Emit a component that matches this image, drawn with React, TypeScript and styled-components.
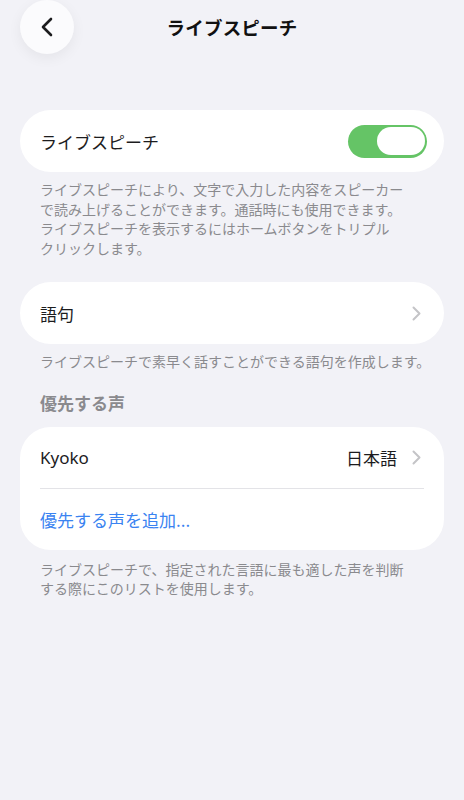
import React from 'react';
import styled, { createGlobalStyle } from 'styled-components';

const GlobalStyle = createGlobalStyle`
  html, body {
    margin: 0;
    padding: 0;
    background: #f2f2f7;
  }
  body {
    font-family: "Noto Sans CJK JP", "Noto Sans", "Liberation Sans", sans-serif;
    color: #1c1c1e;
    -webkit-font-smoothing: antialiased;
  }
`;

const Page = styled.div`
  width: 464px;
  min-height: 800px;
  background: #f2f2f7;
  display: flex;
  flex-direction: column;
`;

const NavBar = styled.header`
  display: grid;
  grid-template-columns: 54px 1fr 54px;
  align-items: center;
  height: 54px;
  padding: 0 20px;
`;

const BackButton = styled.button`
  width: 54px;
  height: 54px;
  border-radius: 50%;
  border: none;
  background: #fbfbfd;
  box-shadow: 0 4px 14px rgba(0, 0, 0, 0.06);
  display: flex;
  align-items: center;
  justify-content: center;
  padding: 0;
  cursor: pointer;
`;

const NavTitle = styled.h1`
  margin: 0;
  text-align: center;
  font-size: 18.5px;
  font-weight: 700;
  letter-spacing: 0.2px;
  color: #111;
`;

const Section = styled.section<{ $top: number }>`
  margin-top: ${(p) => p.$top}px;
`;

const Card = styled.div`
  margin: 0 20px;
  background: #ffffff;
  border-radius: 31px;
  overflow: hidden;
`;

const Row = styled.div<{ $height?: number; $right?: number }>`
  height: ${(p) => p.$height ?? 62}px;
  display: flex;
  align-items: center;
  padding: 0 ${(p) => p.$right ?? 20}px 0 20px;
  gap: 15px;
`;

const RowLabel = styled.span<{ $accent?: boolean }>`
  flex: 1;
  font-size: 17px;
  color: ${(p) => (p.$accent ? '#3a83f1' : '#1c1c1e')};
  font-family: "Noto Sans CJK JP", "Noto Sans", sans-serif;
`;

const LatinLabel = styled(RowLabel)`
  font-family: "Noto Sans", "Liberation Sans", "Noto Sans CJK JP", sans-serif;
`;

const RowValue = styled.span`
  font-size: 17px;
  color: #1c1c1e;
`;

const Separator = styled.div`
  height: 1px;
  margin: 0 20px;
  background: #e3e3e7;
`;

const Footer = styled.p<{ $top?: number }>`
  margin: ${(p) => p.$top ?? 8}px 0 0;
  padding: 0 40px;
  font-size: 14px;
  line-height: 19.5px;
  color: #8a8a8e;
  white-space: nowrap;
`;

const GroupHeader = styled.h2`
  margin: 0;
  padding: 0 40px;
  font-size: 17px;
  line-height: 22px;
  font-weight: 600;
  color: #8a8a8e;
`;

const Toggle = styled.div<{ $on: boolean }>`
  width: 79px;
  height: 33px;
  border-radius: 17px;
  background: ${(p) => (p.$on ? '#65c466' : '#e9e9eb')};
  display: flex;
  align-items: center;
  justify-content: ${(p) => (p.$on ? 'flex-end' : 'flex-start')};
  padding: 0 2.5px;
  box-sizing: border-box;
`;

const Knob = styled.div`
  width: 48px;
  height: 28px;
  border-radius: 14px;
  background: #ffffff;
`;

const Chevron = () => (
  <svg width="9" height="15" viewBox="0 0 9 15" fill="none">
    <path d="M1.5 1.5L7.5 7.5L1.5 13.5" stroke="#c4c4c7" strokeWidth="2" strokeLinecap="round" strokeLinejoin="round" />
  </svg>
);

const BackIcon = () => (
  <svg width="14" height="20" viewBox="0 0 14 20" fill="none">
    <path d="M11 2L3 10L11 18" stroke="#1c1c1e" strokeWidth="2.6" strokeLinecap="round" strokeLinejoin="round" />
  </svg>
);

export default function App() {
  return (
    <Page>
      <GlobalStyle />
      <NavBar>
        <BackButton aria-label="戻る">
          <BackIcon />
        </BackButton>
        <NavTitle>ライブスピーチ</NavTitle>
        <span />
      </NavBar>

      <Section $top={56}>
        <Card>
          <Row $right={17}>
            <RowLabel>ライブスピーチ</RowLabel>
            <Toggle $on>
              <Knob />
            </Toggle>
          </Row>
        </Card>
        <Footer>
          ライブスピーチにより、文字で入力した内容をスピーカー
          <br />
          で読み上げることができます。通話時にも使用できます。
          <br />
          ライブスピーチを表示するにはホームボタンをトリプル
          <br />
          クリックします。
        </Footer>
      </Section>

      <Section $top={24}>
        <Card>
          <Row $right={23}>
            <RowLabel>語句</RowLabel>
            <Chevron />
          </Row>
        </Card>
        <Footer>ライブスピーチで素早く話すことができる語句を作成します。</Footer>
      </Section>

      <Section $top={20}>
        <GroupHeader>優先する声</GroupHeader>
      </Section>

      <Section $top={13}>
        <Card>
          <Row $height={61} $right={23}>
            <LatinLabel>Kyoko</LatinLabel>
            <RowValue>日本語</RowValue>
            <Chevron />
          </Row>
          <Separator />
          <Row $height={61}>
            <RowLabel $accent>優先する声を追加...</RowLabel>
          </Row>
        </Card>
        <Footer $top={10}>
          ライブスピーチで、指定された言語に最も適した声を判断
          <br />
          する際にこのリストを使用します。
        </Footer>
      </Section>
    </Page>
  );
}
